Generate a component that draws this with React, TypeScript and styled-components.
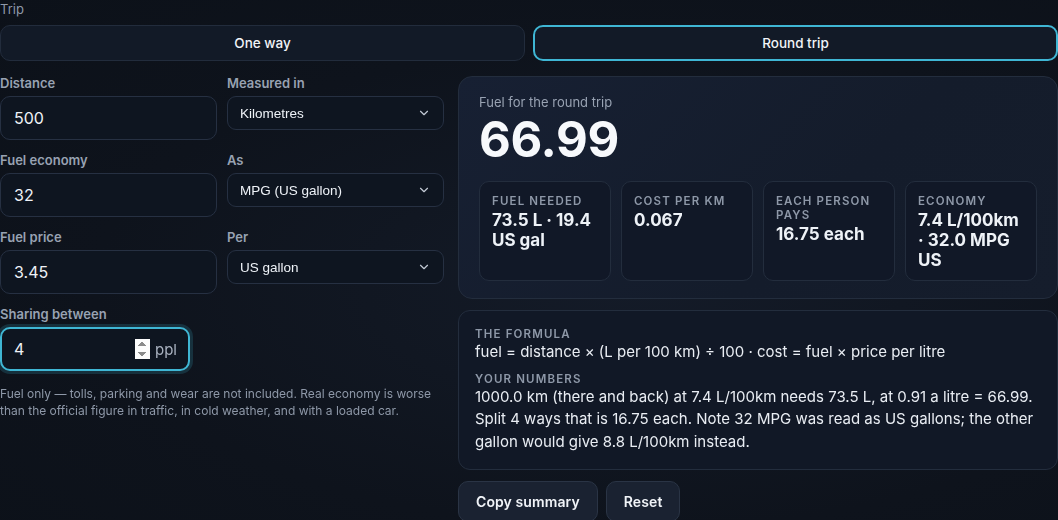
import React, { useState } from 'react'
import styled, { createGlobalStyle } from 'styled-components'
import { ChevronDown } from 'lucide-react'

const GlobalStyle = createGlobalStyle`
  html, body {
    margin: 0;
    padding: 0;
    background: #0d121b;
  }
  body {
    font-family: Inter, "Noto Sans", sans-serif;
    color: #e6ebf3;
    width: 1058px;
    height: 520px;
    overflow: hidden;
    background: radial-gradient(ellipse at 60% 55%, #141b28 0%, #0e131c 60%, #0c1119 100%);
  }
  * { box-sizing: border-box; }
`

const Page = styled.div`
  width: 1058px;
  display: flex;
  flex-direction: column;
`

const TripLabel = styled.div`
  font-size: 13px;
  color: #8e98a8;
  line-height: 17px;
  height: 25px;
  padding-top: 1px;
`

const Toggle = styled.div`
  display: grid;
  grid-template-columns: 1fr 1fr;
  gap: 8px;
  margin-bottom: 15px;
`

const ToggleButton = styled.button<{ $active?: boolean }>`
  height: 36px;
  border-radius: 10px;
  border: ${p => (p.$active ? '2px solid #3fb6d4' : '1px solid #222c3c')};
  background: #121a27;
  color: #f1f4f8;
  font-family: Inter, sans-serif;
  font-size: 13.5px;
  font-weight: 500;
  cursor: pointer;
`

const Main = styled.div`
  display: grid;
  grid-template-columns: 444px 600px;
  gap: 14px;
  align-items: start;
`

const Form = styled.div`
  display: grid;
  grid-template-columns: 217px 217px;
  column-gap: 10px;
  row-gap: 13px;
  align-items: start;
`

const Field = styled.label`
  display: flex;
  flex-direction: column;
  gap: 4px;
`

const FieldLabel = styled.span`
  font-size: 13px;
  font-weight: 600;
  line-height: 16px;
  margin-top: -1px;
  margin-bottom: 1px;
  color: #98a2b2;
`

const TextInput = styled.input`
  height: 44px;
  width: 100%;
  border-radius: 10px;
  border: 1px solid #263042;
  background: #0e1520;
  color: #eef2f7;
  font-family: Inter, sans-serif;
  font-size: 16px;
  padding: 0 13px;
  outline: none;
`

const SelectWrap = styled.div`
  position: relative;
  width: 100%;
  svg {
    position: absolute;
    right: 13px;
    top: 10px;
    color: #c3cad5;
    pointer-events: none;
  }
`

const Select = styled.select`
  appearance: none;
  width: 100%;
  height: 34px;
  border-radius: 9px;
  border: 1px solid #263042;
  background: #0e1520;
  color: #eef2f7;
  font-family: "Liberation Sans", Arial, sans-serif;
  font-size: 13.5px;
  padding: 0 12px;
  outline: none;
`

const ShareBox = styled.div`
  width: 190px;
  height: 44px;
  display: flex;
  align-items: center;
  gap: 5px;
  border-radius: 10px;
  border: 2px solid #3fb6d4;
  box-shadow: 0 0 0 3px rgba(63, 182, 212, 0.18);
  background: #0e1520;
  padding: 0 11px 0 12px;
  input {
    flex: 1;
    min-width: 0;
    border: none;
    background: transparent;
    color: #eef2f7;
    font-family: Inter, sans-serif;
    font-size: 16px;
    outline: none;
    padding: 0;
  }
  input::-webkit-inner-spin-button {
    opacity: 1;
  }
`

const Unit = styled.span`
  font-size: 15px;
  color: #a9b2c0;
`

const Footnote = styled.p`
  grid-column: 1 / -1;
  margin: 1px 0 0;
  font-size: 12px;
  line-height: 17px;
  color: #8e98a8;
`

const Side = styled.div`
  display: flex;
  flex-direction: column;
  gap: 11px;
`

const ResultCard = styled.section`
  border-radius: 14px;
  border: 1px solid #232d3d;
  background: linear-gradient(135deg, #172033 0%, #141c2b 60%, #151d2c 100%);
  padding: 17px 20px 17px;
`

const ResultLabel = styled.div`
  font-size: 13px;
  line-height: 16px;
  color: #98a2b2;
`

const Big = styled.div`
  font-size: 49px;
  font-weight: 700;
  line-height: 54px;
  color: #f7f9fc;
  margin: 3px 0 14px;
  letter-spacing: -0.3px;
`

const Stats = styled.div`
  display: grid;
  grid-template-columns: repeat(4, 1fr);
  gap: 10px;
`

const Stat = styled.div`
  border-radius: 10px;
  border: 1px solid #232d3d;
  background: #111827;
  padding: 12px 12px 10px;
`

const Caps = styled.div`
  font-size: 11.5px;
  font-weight: 600;
  letter-spacing: 0.1em;
  line-height: 14px;
  color: #8e98a8;
  text-transform: uppercase;
`

const StatValue = styled.div`
  font-size: 17px;
  font-weight: 700;
  line-height: 20px;
  color: #eef2f7;
  margin-top: 2px;
`

const FormulaCard = styled.section`
  border-radius: 12px;
  border: 1px solid #232d3d;
  background: #111826;
  padding: 16px 16px 16px;
`

const FormulaText = styled.p<{ $gap?: number }>`
  margin: 0 0 ${p => p.$gap ?? 0}px;
  font-size: 15px;
  line-height: 22.5px;
  color: #e9edf3;
`

const Actions = styled.div`
  display: flex;
  gap: 8px;
`

const Button = styled.button`
  height: 41px;
  padding: 0 17px;
  border-radius: 10px;
  border: 1px solid #2a3445;
  background: #1a2231;
  color: #f1f4f8;
  font-family: Inter, sans-serif;
  font-size: 14px;
  font-weight: 600;
  letter-spacing: 0.1px;
  cursor: pointer;
`

const stats = [
  { label: 'Fuel needed', value: '73.5 L · 19.4 US gal' },
  { label: 'Cost per km', value: '0.067' },
  { label: 'Each person pays', value: '16.75 each' },
  { label: 'Economy', value: '7.4 L/100km · 32.0 MPG US' },
]

const App = () => {
  const [round, setRound] = useState(true)
  return (
    <Page>
      <GlobalStyle />
      <TripLabel>Trip</TripLabel>
      <Toggle>
        <ToggleButton $active={!round} onClick={() => setRound(false)}>One way</ToggleButton>
        <ToggleButton $active={round} onClick={() => setRound(true)}>Round trip</ToggleButton>
      </Toggle>
      <Main>
        <Form>
          <Field>
            <FieldLabel>Distance</FieldLabel>
            <TextInput defaultValue="500" />
          </Field>
          <Field>
            <FieldLabel>Measured in</FieldLabel>
            <SelectWrap>
              <Select defaultValue="km">
                <option value="km">Kilometres</option>
                <option value="mi">Miles</option>
              </Select>
              <ChevronDown size={14} strokeWidth={2} />
            </SelectWrap>
          </Field>
          <Field>
            <FieldLabel>Fuel economy</FieldLabel>
            <TextInput defaultValue="32" />
          </Field>
          <Field>
            <FieldLabel>As</FieldLabel>
            <SelectWrap>
              <Select defaultValue="us">
                <option value="us">MPG (US gallon)</option>
                <option value="uk">MPG (UK gallon)</option>
                <option value="l">L/100km</option>
              </Select>
              <ChevronDown size={14} strokeWidth={2} />
            </SelectWrap>
          </Field>
          <Field>
            <FieldLabel>Fuel price</FieldLabel>
            <TextInput defaultValue="3.45" />
          </Field>
          <Field>
            <FieldLabel>Per</FieldLabel>
            <SelectWrap>
              <Select defaultValue="usg">
                <option value="usg">US gallon</option>
                <option value="l">Litre</option>
              </Select>
              <ChevronDown size={14} strokeWidth={2} />
            </SelectWrap>
          </Field>
          <Field>
            <FieldLabel>Sharing between</FieldLabel>
            <ShareBox>
              <input type="number" defaultValue={4} autoFocus />
              <Unit>ppl</Unit>
            </ShareBox>
          </Field>
          <div />
          <Footnote>
            Fuel only — tolls, parking and wear are not included. Real economy is worse than the official
            figure in traffic, in cold weather, and with a loaded car.
          </Footnote>
        </Form>
        <Side>
          <ResultCard>
            <ResultLabel>Fuel for the round trip</ResultLabel>
            <Big>66.99</Big>
            <Stats>
              {stats.map(s => (
                <Stat key={s.label}>
                  <Caps>{s.label}</Caps>
                  <StatValue>{s.value}</StatValue>
                </Stat>
              ))}
            </Stats>
          </ResultCard>
          <FormulaCard>
            <Caps>The formula</Caps>
            <FormulaText $gap={8}>
              fuel = distance × (L per 100 km) ÷ 100 · cost = fuel × price per litre
            </FormulaText>
            <Caps>Your numbers</Caps>
            <FormulaText>
              1000.0 km (there and back) at 7.4 L/100km needs 73.5 L, at 0.91 a litre = 66.99. Split 4 ways
              that is 16.75 each. Note 32 MPG was read as US gallons; the other gallon would give 8.8 L/100km
              instead.
            </FormulaText>
          </FormulaCard>
          <Actions>
            <Button>Copy summary</Button>
            <Button>Reset</Button>
          </Actions>
        </Side>
      </Main>
    </Page>
  )
}

export default App
